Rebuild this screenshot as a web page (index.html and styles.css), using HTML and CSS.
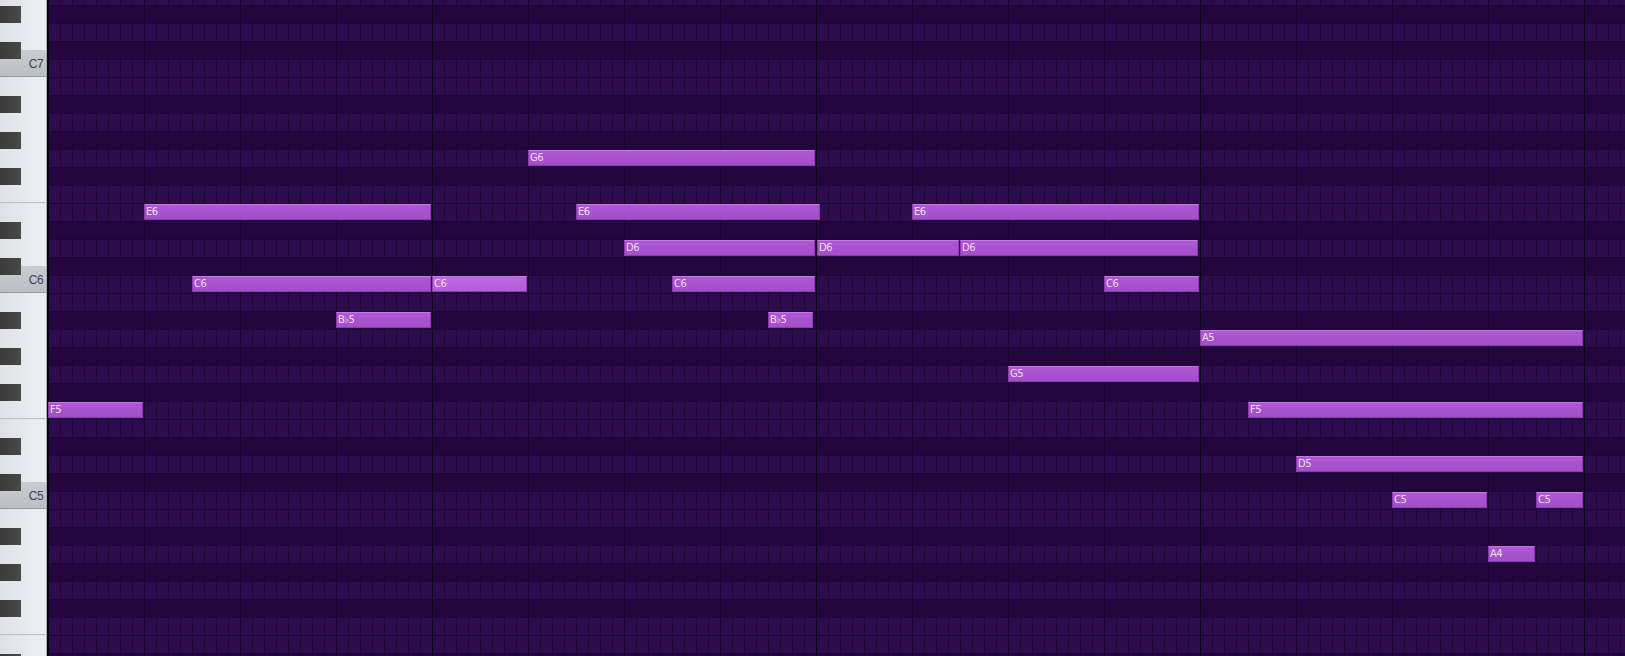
FILE: index.html
```html
<!DOCTYPE html>
<html>
<head>
<meta charset="utf-8">
<title>Piano Roll</title>
<link rel="stylesheet" href="styles.css">
</head>
<body>
<div class="roll">
  <div class="keyboard">
    <div class="layer whites">
      <div class="wk h27"></div>
      <div class="wk h36"></div>
      <div class="wk h27 c"><span>C7</span></div>
      <div class="wk h27"></div>
      <div class="wk h36"></div>
      <div class="wk h36"></div>
      <div class="wk h27 f"></div>
      <div class="wk h27"></div>
      <div class="wk h36"></div>
      <div class="wk h27 c"><span>C6</span></div>
      <div class="wk h27"></div>
      <div class="wk h36"></div>
      <div class="wk h36"></div>
      <div class="wk h27 f"></div>
      <div class="wk h27"></div>
      <div class="wk h36"></div>
      <div class="wk h27 c"><span>C5</span></div>
      <div class="wk h27"></div>
      <div class="wk h36"></div>
      <div class="wk h36"></div>
      <div class="wk h27 f"></div>
      <div class="wk h27"></div>
      <div class="wk h36"></div>
    </div>
    <div class="layer blacks">
      <div class="kr"></div>
      <div class="kr"><div class="bk"></div></div>
      <div class="kr"></div>
      <div class="kr"><div class="bk"></div></div>
      <div class="kr"></div>
      <div class="kr"></div>
      <div class="kr"><div class="bk"></div></div>
      <div class="kr"></div>
      <div class="kr"><div class="bk"></div></div>
      <div class="kr"></div>
      <div class="kr"><div class="bk"></div></div>
      <div class="kr"></div>
      <div class="kr"></div>
      <div class="kr"><div class="bk"></div></div>
      <div class="kr"></div>
      <div class="kr"><div class="bk"></div></div>
      <div class="kr"></div>
      <div class="kr"></div>
      <div class="kr"><div class="bk"></div></div>
      <div class="kr"></div>
      <div class="kr"><div class="bk"></div></div>
      <div class="kr"></div>
      <div class="kr"><div class="bk"></div></div>
      <div class="kr"></div>
      <div class="kr"></div>
      <div class="kr"><div class="bk"></div></div>
      <div class="kr"></div>
      <div class="kr"><div class="bk"></div></div>
      <div class="kr"></div>
      <div class="kr"></div>
      <div class="kr"><div class="bk"></div></div>
      <div class="kr"></div>
      <div class="kr"><div class="bk"></div></div>
      <div class="kr"></div>
      <div class="kr"><div class="bk"></div></div>
      <div class="kr"></div>
      <div class="kr"></div>
      <div class="kr"><div class="bk"></div></div>
    </div>
  </div>
  <div class="grid">
    <div class="rows">
      <div class="row"></div>
      <div class="row d"></div>
      <div class="row"></div>
      <div class="row d"></div>
      <div class="row"></div>
      <div class="row"></div>
      <div class="row d"></div>
      <div class="row"></div>
      <div class="row d"></div>
      <div class="row"></div>
      <div class="row d"></div>
      <div class="row"></div>
      <div class="row"></div>
      <div class="row d"></div>
      <div class="row"></div>
      <div class="row d"></div>
      <div class="row"></div>
      <div class="row"></div>
      <div class="row d"></div>
      <div class="row"></div>
      <div class="row d"></div>
      <div class="row"></div>
      <div class="row d"></div>
      <div class="row"></div>
      <div class="row"></div>
      <div class="row d"></div>
      <div class="row"></div>
      <div class="row d"></div>
      <div class="row"></div>
      <div class="row"></div>
      <div class="row d"></div>
      <div class="row"></div>
      <div class="row d"></div>
      <div class="row"></div>
      <div class="row d"></div>
      <div class="row"></div>
      <div class="row"></div>
      <div class="row d"></div>
    </div>
    <div class="notes">
      <div class="note" style="left:0px;top:402px;width:95px">F5</div>
      <div class="note" style="left:96px;top:204px;width:287px">E6</div>
      <div class="note" style="left:144px;top:276px;width:239px">C6</div>
      <div class="note" style="left:288px;top:312px;width:95px">B♭5</div>
      <div class="note sel" style="left:384px;top:276px;width:95px">C6</div>
      <div class="note" style="left:480px;top:150px;width:287px">G6</div>
      <div class="note" style="left:528px;top:204px;width:244px">E6</div>
      <div class="note" style="left:576px;top:240px;width:191px">D6</div>
      <div class="note" style="left:624px;top:276px;width:143px">C6</div>
      <div class="note" style="left:720px;top:312px;width:45px">B♭5</div>
      <div class="note" style="left:769px;top:240px;width:142px">D6</div>
      <div class="note" style="left:864px;top:204px;width:287px">E6</div>
      <div class="note" style="left:912px;top:240px;width:238px">D6</div>
      <div class="note" style="left:960px;top:366px;width:191px">G5</div>
      <div class="note" style="left:1056px;top:276px;width:95px">C6</div>
      <div class="note" style="left:1152px;top:330px;width:383px">A5</div>
      <div class="note" style="left:1200px;top:402px;width:335px">F5</div>
      <div class="note" style="left:1248px;top:456px;width:287px">D5</div>
      <div class="note" style="left:1344px;top:492px;width:95px">C5</div>
      <div class="note" style="left:1488px;top:492px;width:47px">C5</div>
      <div class="note" style="left:1440px;top:546px;width:47px">A4</div>
    </div>
  </div>
</div>
</body>
</html>
```

FILE: styles.css
```css
html, body {
  margin: 0;
  padding: 0;
  background: #23063e;
}

.roll {
  display: flex;
  width: 1625px;
  height: 656px;
  overflow: hidden;
}

/* ---------- keyboard ---------- */
.keyboard {
  width: 46px;
  flex: none;
  display: grid;
  overflow: hidden;
  border-right: 1px solid #a4a7ad;
  background: #e4e7ec;
}

.layer {
  grid-area: 1 / 1;
  display: flex;
  flex-direction: column;
  margin-top: -13px;
}

.wk {
  box-sizing: border-box;
  flex: none;
  background: linear-gradient(to right, #dfe2e7, #e8ebf0 70%, #eceef2);
}
.h27 { height: 27px; }
.h36 { height: 36px; }

.wk.c {
  background: linear-gradient(to bottom, #c9ccd1, #bcbfc4);
  border-bottom: 1px solid #9a9ca1;
  display: flex;
  align-items: center;
  justify-content: flex-end;
  padding-right: 3px;
  padding-top: 2px;
}
.wk.c span {
  font-family: "Liberation Sans", Arial, sans-serif;
  font-size: 12px;
  color: #3f4650;
  line-height: 12px;
  letter-spacing: -0.6px;
}
.wk.f {
  border-bottom: 1px solid #b9bcc1;
}

.kr {
  height: 18px;
  flex: none;
}
.bk {
  margin-top: 1px;
  width: 21px;
  height: 17px;
  background: linear-gradient(to right, #3a3a3a, #454545 80%, #4c4c4c);
}

/* ---------- grid ---------- */
.grid {
  position: relative;
  flex: 1;
  border-left: 1px solid #0b0014;
  overflow: hidden;
}

.rows {
  display: flex;
  flex-direction: column;
  margin-top: -13px;
}

.row {
  box-sizing: border-box;
  height: 18px;
  flex: none;
  border-top: 1px solid #1d0435;
  background-color: #2d0c4d;
  background-image:
    repeating-linear-gradient(to right, #0c0018 0 1px, transparent 1px 384px),
    repeating-linear-gradient(to right, #170230 0 1px, transparent 1px 96px),
    repeating-linear-gradient(to right, #1f0538 0 1px, transparent 1px 12px);
}
.row.d {
  background-color: #23063e;
}

.notes {
  position: absolute;
  inset: 0;
}

.note {
  position: absolute;
  box-sizing: border-box;
  height: 16px;
  background: linear-gradient(to bottom, #ae58d4, #a54dcb);
  border: 1px solid #8a3bb0;
  border-top-color: #c07ae0;
  color: #f1dcfb;
  font-family: "DejaVu Sans", "Liberation Sans", sans-serif;
  font-size: 10px;
  line-height: 14px;
  padding-left: 1px;
  letter-spacing: -0.5px;
  white-space: nowrap;
  overflow: hidden;
}
.note.sel {
  background: linear-gradient(to bottom, #bd68e0, #b55dd9);
}
```
